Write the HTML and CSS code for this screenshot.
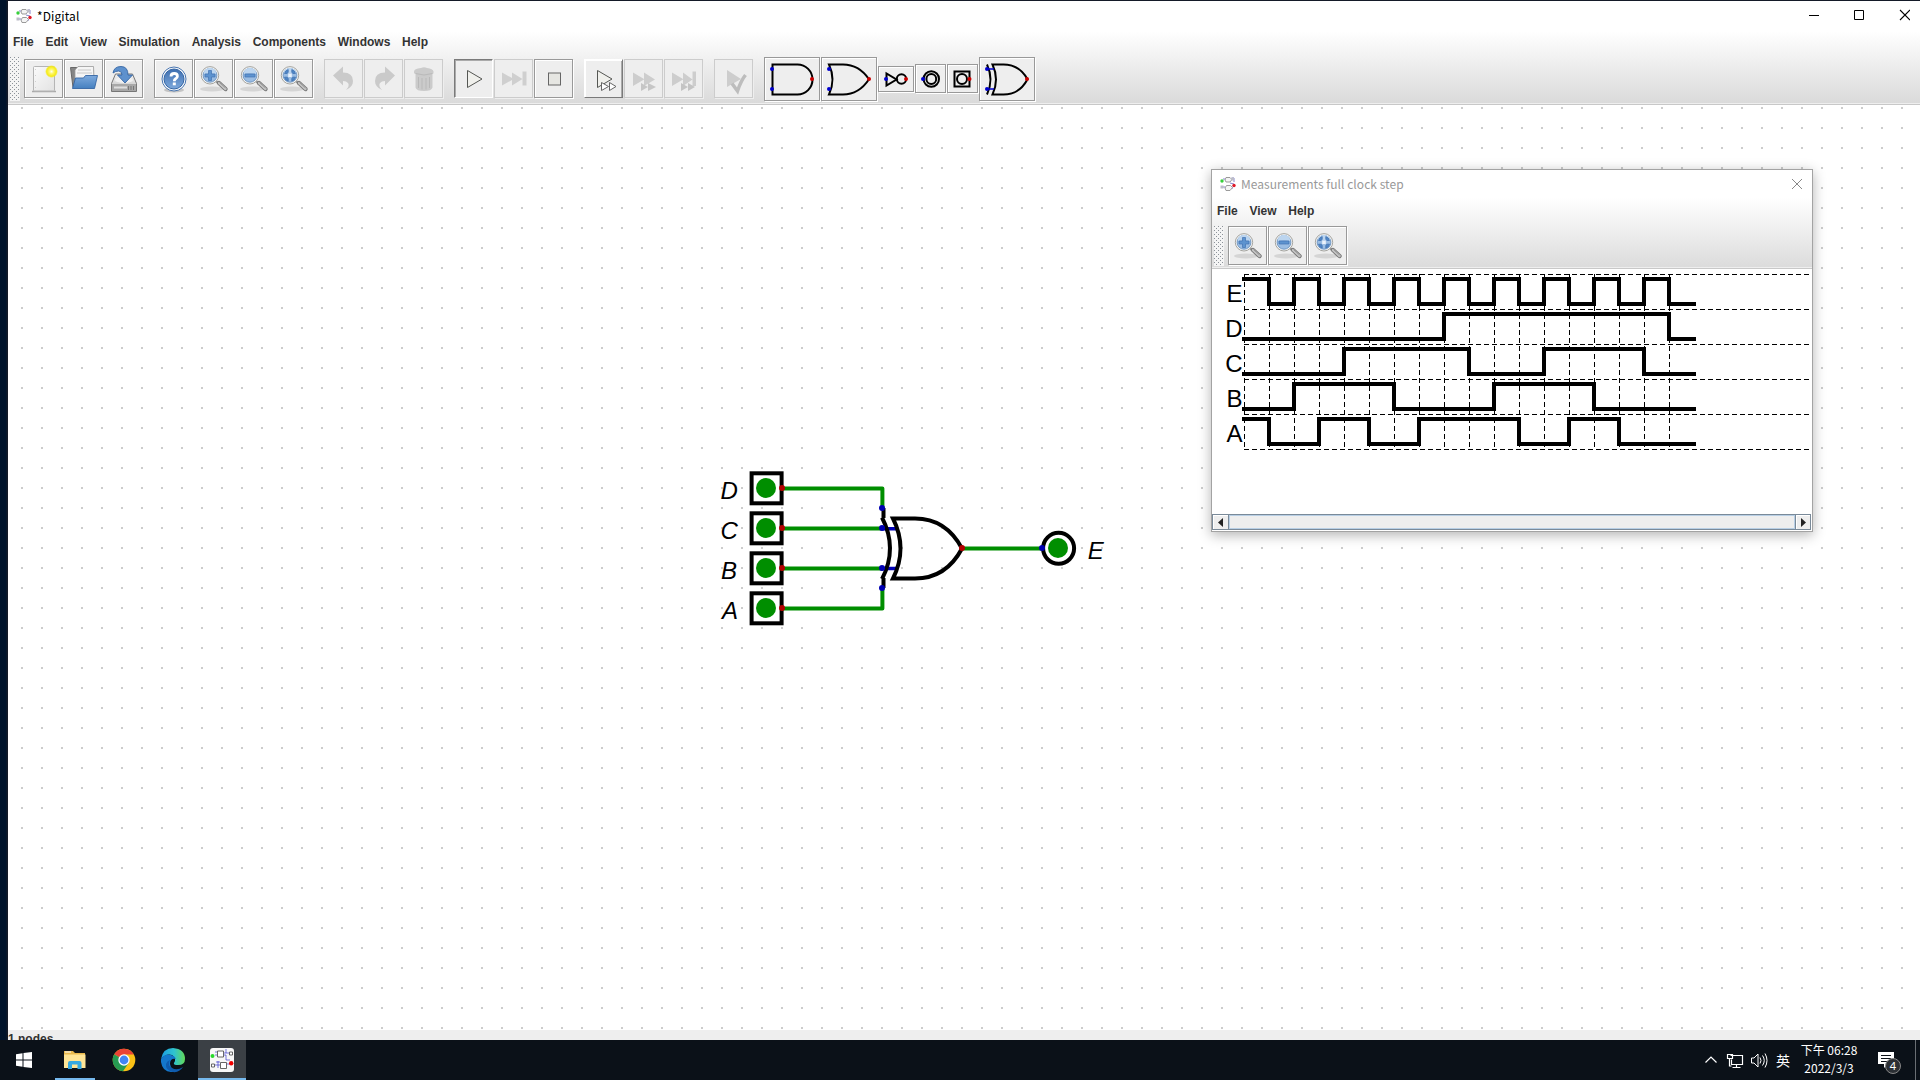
FILE: index.html
```html
<!DOCTYPE html>
<html lang="zh-Hant">
<head>
<meta charset="utf-8">
<title>Digital</title>
<link rel="stylesheet" href="styles.css">
</head>
<body>
<svg class="defs" width="0" height="0">
  <defs>
    <linearGradient id="gBlue" x1="0" y1="0" x2="0" y2="1"><stop offset="0" stop-color="#3d6eb0"/><stop offset="1" stop-color="#7ea9dc"/></linearGradient>
    <linearGradient id="gFolder" x1="0" y1="0" x2="0" y2="1"><stop offset="0" stop-color="#7eaadd"/><stop offset="1" stop-color="#4580c0"/></linearGradient>
    <linearGradient id="gGrey" x1="0" y1="0" x2="0" y2="1"><stop offset="0" stop-color="#f4f4f4"/><stop offset="1" stop-color="#bcbcbc"/></linearGradient>
    <linearGradient id="gPaper" x1="0" y1="0" x2="1" y2="1"><stop offset="0" stop-color="#fbfbfb"/><stop offset="1" stop-color="#e2e2e2"/></linearGradient>
    <radialGradient id="gSun"><stop offset="0" stop-color="#fffff0"/><stop offset=".35" stop-color="#fff766"/><stop offset=".75" stop-color="#f5ea17"/><stop offset="1" stop-color="#f5ea17" stop-opacity="0"/></radialGradient>
    <linearGradient id="gEdge" x1="0" y1="0" x2="1" y2="0"><stop offset="0" stop-color="#1b9de2"/><stop offset=".55" stop-color="#2fc3d0"/><stop offset="1" stop-color="#62d957"/></linearGradient>
  </defs>
  <symbol id="lens" viewBox="1 1 37 37">
    <ellipse cx="18" cy="30" rx="12" ry="2.600" fill="#000" opacity=".1"/>
    <path d="M21.500 21.500l3 3" stroke="#8a8a8a" stroke-width="2"/>
    <path d="M25 24l6.500 6" stroke="#777" stroke-width="4.400" stroke-linecap="round"/>
    <path d="M25 24l6.500 6" stroke="#c4c4c4" stroke-width="2.400" stroke-linecap="round"/>
    <path d="M25.500 23.500l6 5.500" stroke="#8a8a8a" stroke-width=".8"/>
    <circle cx="16" cy="16.300" r="8.700" fill="#f4f4f4" stroke="#a5a5a0" stroke-width="1"/>
    <circle cx="16" cy="16.300" r="6.900" fill="#9bbde3" stroke="#6d94c0" stroke-width=".9"/>
    <path d="M9.800 15a6.200 6.200 0 0 1 12.400 0q-6-2-12.400 0z" fill="#bcd5ef"/>
  </symbol>
  <symbol id="plus" viewBox="1 1 37 37"><use href="#lens" x="1" y="1" width="37" height="37"/><path d="M14.500 11.500h3v3.500h3.500v3h-3.500v3.500h-3V18H11v-3h3.500z" fill="#5d93cf" stroke="#4273b2" stroke-width=".7"/></symbol>
  <symbol id="minus" viewBox="1 1 37 37"><use href="#lens" x="1" y="1" width="37" height="37"/><path d="M11 15h10v3H11z" fill="#5d93cf" stroke="#4273b2" stroke-width=".7"/></symbol>
  <symbol id="fit" viewBox="1 1 37 37"><use href="#lens" x="1" y="1" width="37" height="37"/><path d="M10.500 14.500q.5-3 3.700-4v2.700l-1 1.300zM21.500 14.500q-.5-3-3.700-4v2.700l1 1.300zM10.500 18.200q.5 3 3.700 4v-2.700l-1-1.300zM21.500 18.200q-.5 3-3.700 4v-2.700l1-1.300z" fill="#4f86c6" stroke="#4273b2" stroke-width=".8"/><path d="M14.200 14.500h3.600v3.600h-3.600z" fill="#eaf2fb"/></symbol>
  <symbol id="chip" viewBox="0 0 16 16">
    <path d="M6 1.500h4l2 2-2 2.500H6l-1-2zM6.500 9.500h4l2 2-2.500 3H6l-1-2.500z" fill="#f4f4f4" stroke="#909090" stroke-width=".9"/>
    <path d="M12 2h2v4M3 3h2M13 12h-1M1 11h4M10 7l4 1" fill="none" stroke="#8585cd" stroke-width="1"/>
    <path d="M11 1.500h3v3h-3zM.5 9.500h3v3h-3z" fill="#bcbcc8"/>
    <circle cx="2" cy="5" r="1.700" fill="#37cf3b"/><circle cx="14" cy="9.500" r="1.700" fill="#df1927"/>
  </symbol>
</svg>

<main class="screen">
  <section class="app">
    <header class="titlebar">
      <svg class="logo" viewBox="0 0 16 16"><use href="#chip"/></svg>
      <span class="caption">*Digital</span>
      <svg class="winctl" viewBox="0 0 130 30"><path d="M29 14.500h10" stroke="#000"/><path d="M74.500 9.500h9v9h-9z" fill="none" stroke="#000"/><path d="M120 9l10 10M130 9l-10 10" stroke="#000" stroke-width="1.100"/></svg>
    </header>
    <div class="chrome">
      <nav class="menu"><span>File</span><span>Edit</span><span>View</span><span>Simulation</span><span>Analysis</span><span>Components</span><span>Windows</span><span>Help</span></nav>
      <div class="toolbar">
        <i class="grip"></i>
        <button class="btn"><svg viewBox="1 1 37 37"><path d="M8 32.500h24" stroke="#aaa" stroke-width="1.500"/><rect x="9.500" y="7.500" width="21" height="24.500" rx="1" fill="url(#gPaper)" stroke="#b5b5b5"/><path d="M11.500 10v20" stroke="#d0d0d0" stroke-dasharray="1 5"/><circle cx="27.500" cy="12.500" r="6.500" fill="url(#gSun)"/></svg></button>
        <button class="btn"><svg viewBox="1 1 37 37"><path d="M6.500 8.500h8l1.500 2h13v18H9z" fill="#858585" stroke="#686868"/><path d="M11 11l3-3.500h15.500l.5 12H11z" fill="#f5f5f5" stroke="#999" stroke-width=".8"/><path d="M14 11h13M13 14h15" stroke="#c8c8c8"/><path d="M8.500 29.500l3-10.500h8l2-2.500H33.500l-3 13z" fill="url(#gFolder)" stroke="#3465a4" stroke-width=".9"/></svg></button>
        <button class="btn"><svg viewBox="1 1 37 37"><path d="M7.500 24.500l4-9.500h17l4 9.500v8h-25z" fill="url(#gGrey)" stroke="#777"/><path d="M8 25h24v7H8z" fill="#a8a8a8"/><path d="M10 28.500h13" stroke="#dedede" stroke-width="2"/><path d="M24.500 27v4M27 27v4M29.500 27v4" stroke="#777"/><ellipse cx="20" cy="21" rx="9" ry="3" fill="#f1f1f1"/><path d="M9 14q1-6.500 8-6.500 7 0 7 8.500h4.500L21 24l-7.500-8H18q0-4-3.500-4-3 0-5.500 2z" fill="#5e91cd" stroke="#3465a4" stroke-width=".9"/></svg></button>
        <button class="btn gap"><svg viewBox="1 1 37 37"><ellipse cx="20" cy="31" rx="10" ry="2.500" fill="#000" opacity=".18"/><circle cx="20" cy="20" r="12" fill="#f5f8fc" stroke="#4a76b0" stroke-width="1"/><circle cx="20" cy="20" r="10" fill="url(#gBlue)" stroke="#3465a4"/><path d="M17 17.500q0-3 3.200-3t3.200 2.700q0 1.500-1.800 2.600-1.300.8-1.300 2.400" fill="none" stroke="#fff" stroke-width="2.800"/><rect x="18.800" y="23.500" width="3" height="2.800" fill="#fff"/></svg></button>
        <button class="btn"><svg viewBox="1 1 37 37"><use href="#plus" x="1" y="1" width="37" height="37"/></svg></button>
        <button class="btn"><svg viewBox="1 1 37 37"><use href="#minus" x="1" y="1" width="37" height="37"/></svg></button>
        <button class="btn"><svg viewBox="1 1 37 37"><use href="#fit" x="1" y="1" width="37" height="37"/></svg></button>
        <button class="btn gap off"><svg viewBox="1 1 37 37"><path d="M9 16.500l10-9v6q10 0 10 8.500 0 6-7 9 4-4 2-7-1.500-2-5-2v4.500z" fill="#cacaca"/></svg></button>
        <button class="btn off"><svg viewBox="1 1 37 37"><path d="M31 16.500l-10-9v6q-10 0-10 8.500 0 6 7 9-4-4-2-7 1.500-2 5-2v4.500z" fill="#cacaca"/></svg></button>
        <button class="btn off"><svg viewBox="1 1 37 37"><path d="M10 12.500q0-3 7-3.500 3-1.500 6 0 6 .5 6.500 3.500v2h-1v14q-1 3.500-8.500 3.500t-8.500-3.500v-14H10z" fill="#cbcbcb"/><path d="M11.500 14.500q8.500 3 17 0M14.500 18v11M18 19v11.500M22 19v11.500M25.500 18v11" fill="none" stroke="#b9b9b9"/></svg></button>
        <button class="btn gap down"><svg viewBox="1 1 37 37"><path d="M13.500 11.500v17l14.500-8.500z" fill="#f0f0ec" stroke="#555753"/></svg></button>
        <button class="btn off"><svg viewBox="1 1 37 37"><path d="M8 13.500v13L18 21v5.500L28.500 20v6.500h4v-14h-4V20L18 13.500V19z" fill="#cfcfcf"/></svg></button>
        <button class="btn"><svg viewBox="1 1 37 37"><rect x="14.500" y="14" width="12" height="12" fill="#e6e6e2" stroke="#666"/></svg></button>
        <button class="btn gap up"><svg viewBox="1 1 37 37"><path d="M13.500 11.500v17l14.500-8.500z" fill="#f0f0ec" stroke="#555753"/><path d="M17.500 23.500v8l7-4zM25.500 23.500v8l6.500-4z" fill="#fff" stroke="#666"/></svg></button>
        <button class="btn off"><svg viewBox="1 1 37 37"><path d="M9 13.500v13.500l11-6.500V27l11-6.500-11-7V20z" fill="#cdcdcd"/><path d="M17 24v8l7-4v4l8-4-8-4v4z" fill="#c6c6c6"/></svg></button>
        <button class="btn off"><svg viewBox="1 1 37 37"><path d="M8 13.500V27l11-6.500V27l9.500-6.500V27H32V12.500h-3.500v8L19 13.500V20z" fill="#cdcdcd"/><path d="M17 24v8l7-4v4l7-4-7-4v4z" fill="#c4c4c4"/></svg></button>
        <button class="btn gap off"><svg viewBox="1 1 37 37"><path d="M13 11v17l14-8z" fill="#cdcdcd"/><path d="M18 24.500l5.500 7.500Q27 21.500 31.500 16" fill="none" stroke="#bdbdbd" stroke-width="3.500"/></svg></button>
        <button class="btn gate gap"><svg viewBox="765 58 54 42"><path d="M772.500 64.500h25a15 15 0 0 1 0 30h-25z"/><g class="pin"><circle cx="772" cy="69" r="2"/><circle cx="772" cy="89" r="2"/></g><circle class="out" cx="812" cy="79" r="2"/></svg></button>
        <button class="btn gate"><svg viewBox="822 58 54 42"><path d="M829 64.500h14q16 0 26 14.800-10 15.200-26 15.200h-14q7-15 0-30z"/><g class="pin"><circle cx="829" cy="69" r="2"/><circle cx="829" cy="89" r="2"/></g><circle class="out" cx="869" cy="79" r="2"/></svg></button>
        <button class="btn gate inv"><svg viewBox="879 67 34 24"><path d="M886.500 73.500v12l10-6z"/><circle cx="901.500" cy="79" r="4.700"/><g class="pin"><circle cx="886" cy="79" r="2"/></g><circle class="out" cx="906" cy="79" r="2"/></svg></button>
        <button class="btn gate small"><svg viewBox="916 65 29 27"><circle cx="931.300" cy="79" r="7.700"/><circle cx="931.300" cy="79" r="4.900"/><g class="pin"><circle cx="923" cy="79" r="2"/></g></svg></button>
        <button class="btn gate small"><svg viewBox="948 65 29 27"><path d="M954.500 71.500h15v15h-15z"/><circle cx="962" cy="79" r="5"/><circle class="out" cx="969.500" cy="79" r="2"/></svg></button>
        <button class="btn gate"><svg viewBox="980 58 54 42"><path d="M987 64.500q7 15 0 30"/><path d="M992.500 64.500h11q16 0 24 14.800-8 15.200-24 15.200h-11q7-15 0-30z"/><path class="pinline" d="M987 69h7M987 89h7"/><g class="pin"><circle cx="987" cy="69" r="2"/><circle cx="987" cy="89" r="2"/></g><circle class="out" cx="1027" cy="79" r="2"/></svg></button>
      </div>
    </div>
    <div class="canvas">
      <svg class="circuit" viewBox="8 105 1912 925">
        <g class="inputs">
          <rect x="751.600" y="473.300" width="30" height="30"/><rect x="751.600" y="513.300" width="30" height="30"/><rect x="751.600" y="553.300" width="30" height="30"/><rect x="751.600" y="593.300" width="30" height="30"/>
          <circle cx="1058.600" cy="548.300" r="15.500"/>
        </g>
        <g class="wire"><path d="M782 488.400h100.400V508M782 528.400h100M782 568.400h100M782 608.400h100.400V588M962 548.400h80"/></g>
        <path class="pinwire" d="M882 528.700h15M882 568.500h15"/>
        <g class="body"><path d="M883.500 508v10M883.500 588v-10M882 517.500q16 31 0 61.500"/><path d="M893 518.500h22q31 0 47 30-16 30-47 30h-22q15-30 0-60z"/></g>
        <g class="level"><circle cx="766" cy="488" r="10"/><circle cx="766" cy="528" r="10"/><circle cx="766" cy="568" r="10"/><circle cx="766" cy="608" r="10"/><circle cx="1058" cy="548" r="10"/></g>
        <g class="red"><circle cx="782" cy="488" r="3"/><circle cx="782" cy="528" r="3"/><circle cx="782" cy="568" r="3"/><circle cx="782" cy="608" r="3"/><circle cx="962" cy="548" r="3"/></g>
        <g class="blue"><circle cx="882" cy="508" r="3"/><circle cx="882" cy="528" r="3"/><circle cx="882" cy="568" r="3"/><circle cx="882" cy="588" r="3"/><circle cx="1042" cy="548" r="3"/></g>
        <g class="names"><text x="720.500" y="499">D</text><text x="720.500" y="539">C</text><text x="721" y="579">B</text><text x="722" y="619">A</text><text x="1087.700" y="559">E</text></g>
      </svg>
    </div>
    <footer class="status">1 nodes</footer>
  </section>

  <section class="dialog">
    <header class="titlebar">
      <svg class="logo" viewBox="0 0 16 16"><use href="#chip"/></svg>
      <span class="caption">Measurements full clock step</span>
      <svg class="close" viewBox="0 0 10 10"><path d="M0 0l10 10M10 0L0 10" stroke="#888"/></svg>
    </header>
    <div class="chrome">
      <nav class="menu"><span>File</span><span>View</span><span>Help</span></nav>
      <div class="toolbar">
        <i class="grip"></i>
        <button class="btn"><svg viewBox="1 1 37 37"><use href="#plus" x="1" y="1" width="37" height="37"/></svg></button>
        <button class="btn"><svg viewBox="1 1 37 37"><use href="#minus" x="1" y="1" width="37" height="37"/></svg></button>
        <button class="btn"><svg viewBox="1 1 37 37"><use href="#fit" x="1" y="1" width="37" height="37"/></svg></button>
      </div>
    </div>
    <svg class="waves" viewBox="1212 269 600 245">
      <path class="grid" d="M1244 274.500h565M1244 309.500h565M1244 344.500h565M1244 379.500h565M1244 414.500h565M1244 449.500h565"/>
      <path class="grid" d="M1244.500 274v174M1269.500 274v174M1294.500 274v174M1319.500 274v174M1344.500 274v174M1369.500 274v174M1394.500 274v174M1419.500 274v174M1444.500 274v174M1469.500 274v174M1494.500 274v174M1519.500 274v174M1544.500 274v174M1569.500 274v174M1594.500 274v174M1619.500 274v174M1644.500 274v174M1669.500 274v174"/>
      <g class="signal">
        <path d="M1242 279h27v25h25v-25h25v25h25v-25h25v25h25v-25h25v25h25v-25h25v25h25v-25h25v25h25v-25h25v25h25v-25h25v25h25v-25h25v25h27"/>
        <path d="M1242 339H1444v-25H1669v25H1696"/>
        <path d="M1242 374H1344v-25H1469v25H1544v-25H1644v25H1696"/>
        <path d="M1242 409H1294v-25H1394v25H1494v-25H1594v25H1696"/>
        <path d="M1242 419H1269v25H1319v-25H1369v25H1419v-25H1519v25H1569v-25H1619v25H1696"/>
      </g>
      <g class="names"><text x="1242.500" y="302">E</text><text x="1242.500" y="337">D</text><text x="1242.500" y="372">C</text><text x="1242.500" y="407">B</text><text x="1242.500" y="442">A</text></g>
    </svg>
    <div class="scroll">
      <i class="arrow"><svg viewBox="0 0 5 9"><path d="M5 0v9L0 4.500z" fill="#222"/></svg></i>
      <i class="thumb"></i>
      <i class="arrow right"><svg viewBox="0 0 5 9"><path d="M0 0v9l5-4.500z" fill="#222"/></svg></i>
    </div>
  </section>
</main>

<footer class="taskbar">
  <div class="task"><svg viewBox="0 0 48 40"><path d="M16 14.200l6.500-.9v6.200H16zM23.500 13.100L32 12v7.500h-8.500zM16 20.500h6.500v6.200l-6.500-.9zM23.500 20.500H32V28l-8.500-1.100z" fill="#fff"/></svg></div>
  <div class="task open"><svg viewBox="0 0 40 40"><path d="M9 11h9l2 2h10v15H9z" fill="#e9b94d"/><path d="M9 14.500h21.500V28H9z" fill="#ffe596"/><path d="M10 12h6" stroke="#fff"/><path d="M13 29v-6q0-2 2-2h9.500q2 0 2 2v6h-4v-4.500H17V29z" fill="#36a9e1"/></svg></div>
  <div class="task"><svg viewBox="0 0 40 40"><circle cx="20" cy="20" r="11.300" fill="#fbc116"/><path d="M20 20L10.200 14.300A11.300 11.300 0 0 1 29.800 14.500H20z" fill="#ea4335"/><path d="M10.200 14.300A11.300 11.300 0 0 0 19 31.250L25 22.500 20 20z" fill="#269b51"/><circle cx="20" cy="20" r="5.700" fill="#fff"/><circle cx="20" cy="20" r="4.400" fill="#4285f4"/></svg></div>
  <div class="task"><svg viewBox="0 0 40 40"><path d="M8 19Q10 8 20 8q12 1 12 11 0 6-7 6-5 0-4-2 3-5-2-8-6-2-11 4z" fill="url(#gEdge)"/><path d="M8 19q4-6 10-4 4 1 5 4-6-1-6 5 1 6 7 7-14 4-16-9z" fill="#1477cb"/><path d="M17 20q-3 5 2 8 5 3 11-1-4 6-10 5-8-2-7-8 1-3 4-4z" fill="#0f5bad"/></svg></div>
  <div class="task active"><svg viewBox="0 0 48 40"><rect x="12" y="8" width="24" height="24" rx="3" fill="#f7f7f7"/><path d="M19.500 11h6v6h-6zM22.500 22.500h6v6h-6zM31.500 12h3v3h-3zM13.500 24h3v3h-3z" fill="#fff" stroke="#555" stroke-width=".9"/><path d="M17 12h2M17 15h2M26 13h5M26 15h2v5h4M28 9v4M17 25h5M18 22h4M29 24h4M20 21v7" fill="none" stroke="#3c3ccd" stroke-width=".7"/><circle cx="14.500" cy="16" r="2" fill="#28d92c"/><circle cx="33.200" cy="23.300" r="2.200" fill="#f10000"/></svg></div>
  <div class="tray">
    <svg class="sys" viewBox="1700 1040 72 40"><path d="M1706.500 1062.500l5.500-5.500 5.500 5.500M1731.500 1055.500h12v9h-11v-5M1728.500 1054.500h5v4h-5zM1737.500 1065v3M1733.500 1067.500h8M1730.500 1059v7h2" fill="none" stroke="#fff" stroke-width="1.200"/><path d="M1752.500 1058v5h2.500l4 4v-13l-4 4zM1761 1057.500q2 3 0 6M1763.500 1055.500q3.500 5 0 10M1766 1053.500q4 7 0 14" fill="none" stroke="#fff"/></svg>
    <span class="ime">英</span>
    <div class="clock"><span>下午 06:28</span><span>2022/3/3</span></div>
    <div class="notice"><svg viewBox="0 0 18 18"><path d="M1 1h16v12h-6l-4 4v-4H1z" fill="#fff"/><path d="M4 4.500h10M4 7.500h10M4 10.500h7" stroke="#0b1118"/></svg><b>4</b></div>
    <i class="peek"></i>
  </div>
</footer>
</body>
</html>
```
FILE: styles.css
```css
* { box-sizing: border-box; }
body { margin: 0; width: 1920px; height: 1080px; overflow: hidden; display: flex; flex-direction: column; background: #0b1118; font-family: "Liberation Sans", sans-serif; }
.defs { position: absolute; }
svg { display: block; }

.screen { position: relative; height: 1040px; padding: 1px 0 0 8px; background: linear-gradient(90deg, #00132b 0 6px, #141a28 7px); }
.app { height: 1039px; display: flex; flex-direction: column; background: #fff; }

.titlebar { display: flex; align-items: center; height: 30px; padding-left: 8px; background: #fff; flex: none; }
.logo { width: 16px; height: 16px; margin-right: 5px; }
.caption { margin-bottom: 1px; font: 12px/16px "Noto Sans CJK TC", "Noto Sans", sans-serif; letter-spacing: .1px; color: #000; }
.winctl { width: 130px; height: 30px; margin-left: auto; margin-right: 10px; }

.chrome { height: 74px; flex: none; background: linear-gradient(#fff, #dadada 72px); border-bottom: 1px solid #c8c8c8; box-shadow: inset 0 -1px #eee; }
.menu { display: flex; gap: 11.8px; height: 23px; padding-left: 5px; font: bold 12px/23px "Liberation Sans", sans-serif; color: #333; }
.menu span:nth-child(n+2) { margin-left: -.1px; }
.toolbar { display: flex; align-items: center; height: 50px; padding-left: 2px; }
.grip { width: 10px; height: 44px; margin-right: 4px; background: conic-gradient(from 270deg at 1px 1px, #8c9299 90deg, transparent 0) 0 0 / 4px 4px, conic-gradient(from 270deg at 1px 1px, #8c9299 90deg, transparent 0) 2px 2px / 4px 4px, #f4f4f4; }

.btn { width: 39px; height: 39px; flex: none; margin: 0 1px 1px 0; padding: 0; border: 1px solid #999; background: #eee; box-shadow: 1px 1px #fff, inset 1px 1px #fff; }
.btn svg { width: 100%; height: 100%; fill: none; }
.btn.gap { margin-left: 10px; }
.btn.off { border-color: #ccc; box-shadow: 1px 1px #eee; }
.btn.down { border-color: #7a7a7a #fff #fff #7a7a7a; box-shadow: inset 1px 1px #aaa; }
.btn.up { border-color: #fff #7a7a7a #7a7a7a #fff; box-shadow: inset 1px 1px #fff, inset -1px 0 #aaa; }
.gate { width: 56px; height: 44px; margin-bottom: 0; }
.gate.inv { width: 36px; height: 26px; }
.gate.small { width: 31px; height: 29px; margin-bottom: 1px; }
.gate path, .gate circle { stroke: #000; stroke-width: 2; }
.gate .pin circle { fill: #00c; stroke: none; }
.gate .pinline { stroke: #00c; stroke-width: 1.5; }
.gate .out { fill: #c00; stroke: none; }

.canvas { flex: none; height: 925px; background: conic-gradient(from 270deg at 2px 2px, #ccc 90deg, #fff 0) 13px 2px / 20px 20px; }
.circuit { width: 1912px; height: 925px; }
.inputs { fill: #fff; stroke: #000; stroke-width: 4; }
.wire { fill: none; stroke: #008e00; stroke-width: 4; stroke-linejoin: round; }
.pinwire { stroke: #0000b4; stroke-width: 3.600; }
.body { fill: none; stroke: #000; stroke-width: 4; }
.level { fill: #008e00; }
.red { fill: #b20000; }
.blue { fill: #0000b2; }
.circuit .names { font: italic 24px "Liberation Sans", sans-serif; fill: #000; }
.status { height: 10px; flex: none; overflow: hidden; background: #eee; font: bold 12px/18px "Liberation Sans", sans-serif; color: #333; }

.dialog { position: absolute; left: 1211px; top: 169px; width: 602px; height: 363px; border: 1px solid #a3a3a3; background: #fff; box-shadow: 0 3px 12px rgba(0, 0, 0, .3); display: flex; flex-direction: column; }
.dialog .titlebar { height: 28px; }
.dialog .caption { margin-bottom: 0; letter-spacing: .04px; color: #999; }
.dialog .close { width: 10px; height: 10px; margin-left: auto; margin-right: 10px; overflow: visible; }
.dialog .chrome { height: 71px; }
.dialog .menu { height: 23px; line-height: 26px; }
.dialog .toolbar { height: 48px; padding-top: 1px; }
.dialog .grip { height: 40px; }
.waves { width: 600px; height: 245px; flex: none; }
.grid { stroke: #000; stroke-dasharray: 5 3; }
.signal { fill: none; stroke: #000; stroke-width: 4; }
.waves .names { font: 24px "Liberation Sans", sans-serif; text-anchor: end; }
.scroll { display: flex; height: 16px; margin: 0 1px 0 0; border: 1px solid #7a8a99; background: #eee; }
.arrow { width: 15px; display: flex; align-items: center; justify-content: center; background: #eee; box-shadow: inset 1px 1px #fff; }
.arrow.right { width: 14px; padding-left: 1px; }
.arrow svg { width: 5px; height: 9px; }
.thumb { flex: 1; border: solid #7a8a99; border-width: 0 1px; box-shadow: inset 1px 1px #b8cfe5, inset -1px -1px #b8cfe5; }

.taskbar { display: flex; height: 40px; background: #0b1118; color: #fff; }
.task { width: 40px; height: 40px; margin-right: 9px; }
.task svg { width: 100%; height: 100%; }
.task:first-child { width: 48px; margin-right: 7px; }
.task.open { box-shadow: inset 0 -2px #76b9ed; }
.task.active { width: 48px; margin: 0 0 0 -4px; background: #3b4045; box-shadow: inset 0 -2px #76b9ed; }
.tray { display: flex; align-items: center; margin-left: auto; font: 12px/18px "Noto Sans CJK TC", sans-serif; }
.sys { width: 72px; height: 40px; margin-right: 5px; }
.ime { font-size: 14px; width: 14px; margin-right: 9px; }
.clock { width: 60px; display: flex; flex-direction: column; margin-bottom: 2px; text-align: center; white-space: nowrap; }
.notice { position: relative; width: 18px; height: 18px; margin: 0 20px 0 18px; }
.notice b { position: absolute; left: 8px; top: 7px; width: 16px; height: 16px; border: 1px solid #888; border-radius: 50%; background: #2b2f34; font: 11px/14px "Noto Sans", sans-serif; text-align: center; }
.peek { width: 5px; height: 40px; border-left: 1px solid #6a6e73; }
```
